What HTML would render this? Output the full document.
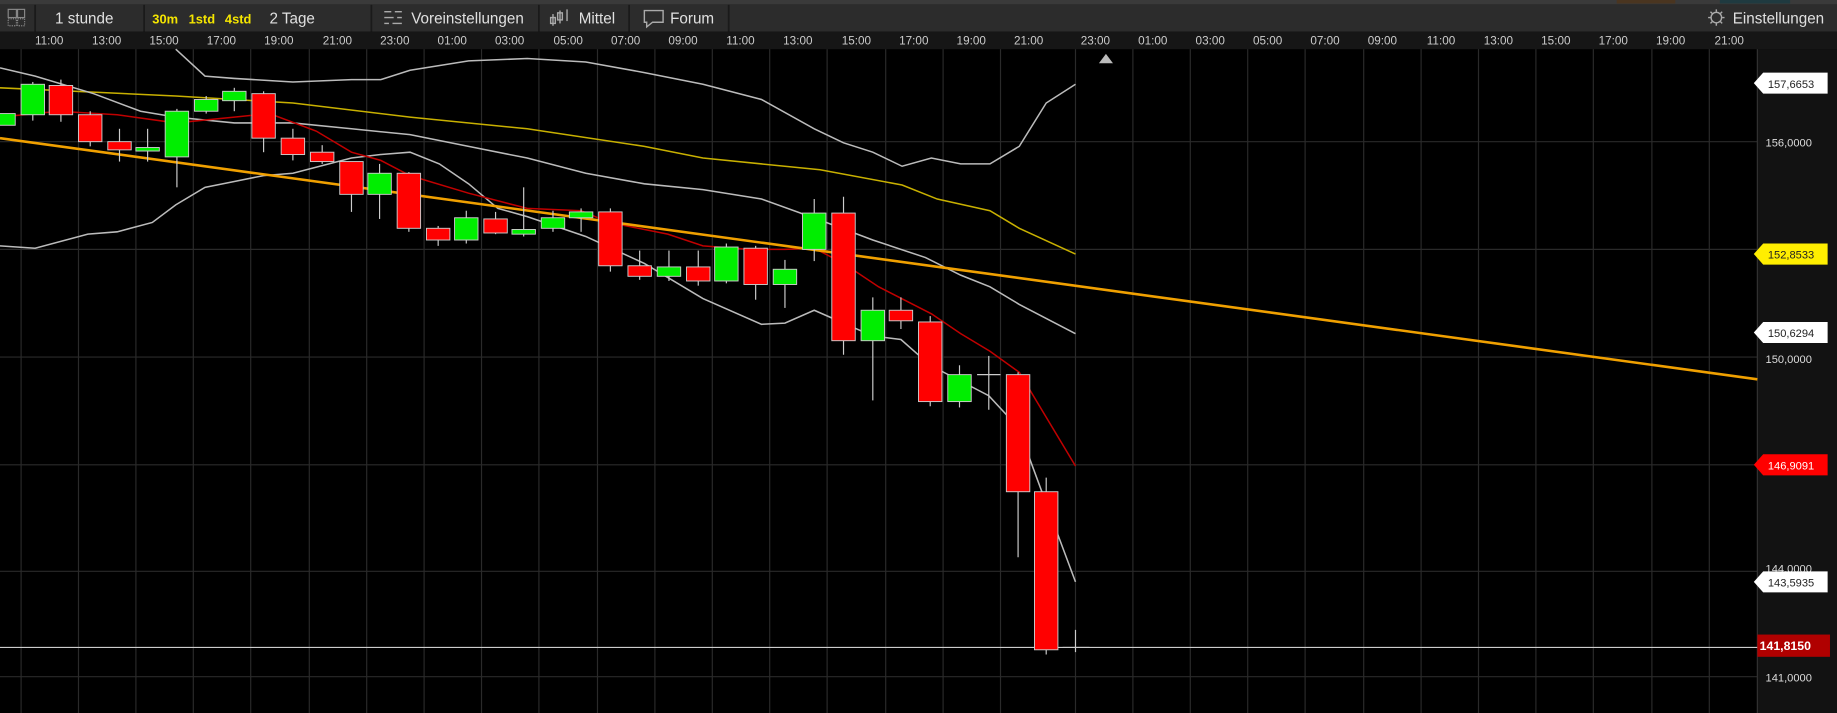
<!DOCTYPE html>
<html><head><meta charset="utf-8"><style>
html,body{margin:0;padding:0;background:#000;overflow:hidden}
svg{display:block}
text{font-family:"Liberation Sans",Arial,sans-serif}
</style></head><body>
<svg width="1837" height="713" viewBox="0 0 1568 609" preserveAspectRatio="none">
<rect width="1568" height="609" fill="#000"/>
<!-- top strip -->
<rect x="0" y="0" width="1568" height="4" fill="#3a3a3a"/>
<rect x="1380" y="0" width="50" height="3" fill="#4a3520"/>
<rect x="1468" y="0" width="60" height="3" fill="#1f3a40"/>
<!-- toolbar -->
<rect x="0" y="4" width="1568" height="23" fill="#2c2c2c"/>
<g stroke="#1a1a1a" stroke-width="1.5">
<line x1="30" y1="4" x2="30" y2="27"/><line x1="123" y1="4" x2="123" y2="27"/>
<line x1="317" y1="4" x2="317" y2="27"/><line x1="460" y1="4" x2="460" y2="27"/>
<line x1="537" y1="4" x2="537" y2="27"/><line x1="622" y1="4" x2="622" y2="27"/>
</g>
<g stroke="#888" fill="none" stroke-width="1"><rect x="7" y="8" width="7" height="7"/><rect x="15" y="8" width="6" height="7"/><rect x="7" y="16" width="7" height="6" stroke-dasharray="1,1"/><rect x="15" y="16" width="6" height="6" stroke-dasharray="1,1"/></g>
<g font-size="13" fill="#e0e0e0">
<text x="47" y="20">1 stunde</text>
<text x="130" y="20" fill="#f5e600" font-size="11" font-weight="bold">30m</text>
<text x="161" y="20" fill="#f5e600" font-size="11" font-weight="bold">1std</text>
<text x="192" y="20" fill="#f5e600" font-size="11" font-weight="bold">4std</text>
<text x="230" y="20">2 Tage</text>
<text x="351" y="20">Voreinstellungen</text>
<text x="494" y="20">Mittel</text>
<text x="572" y="20">Forum</text>
<text x="1479" y="20">Einstellungen</text>
</g>
<g stroke="#aaa" stroke-width="1.2" fill="none">
<line x1="328" y1="10" x2="334" y2="10"/><line x1="337" y1="10" x2="343" y2="10"/>
<line x1="328" y1="15" x2="336" y2="15"/><line x1="339" y1="15" x2="343" y2="15"/>
<line x1="328" y1="20" x2="332" y2="20"/><line x1="335" y1="20" x2="343" y2="20"/>
<line x1="472" y1="12" x2="472" y2="22"/><rect x="470" y="15" width="4" height="5"/><line x1="478" y1="9" x2="478" y2="20"/><rect x="476" y="11" width="4" height="6"/><line x1="484" y1="8" x2="484" y2="18"/>
<path d="M550 9 h16 v10 h-9 l-5 4 v-4 h-2 z"/>
<circle cx="1465" cy="15" r="4.5"/>
<path d="M1465 8v2M1465 20v2M1458 15h2M1470 15h2M1460 10l1.5 1.5M1468.5 18.5l1.5 1.5M1460 20l1.5-1.5M1468.5 11.5l1.5-1.5"/>
</g>
<!-- time axis -->
<rect x="0" y="27" width="1568" height="15" fill="#161616"/>
<g font-size="10" fill="#ccc" text-anchor="middle">
<text x="42" y="38">11:00</text><text x="91" y="38">13:00</text><text x="140" y="38">15:00</text><text x="189" y="38">17:00</text><text x="238" y="38">19:00</text><text x="288" y="38">21:00</text><text x="337" y="38">23:00</text><text x="386" y="38">01:00</text><text x="435" y="38">03:00</text><text x="485" y="38">05:00</text><text x="534" y="38">07:00</text><text x="583" y="38">09:00</text><text x="632" y="38">11:00</text><text x="681" y="38">13:00</text><text x="731" y="38">15:00</text><text x="780" y="38">17:00</text><text x="829" y="38">19:00</text><text x="878" y="38">21:00</text><text x="935" y="38">23:00</text><text x="984" y="38">01:00</text><text x="1033" y="38">03:00</text><text x="1082" y="38">05:00</text><text x="1131" y="38">07:00</text><text x="1180" y="38">09:00</text><text x="1230" y="38">11:00</text><text x="1279" y="38">13:00</text><text x="1328" y="38">15:00</text><text x="1377" y="38">17:00</text><text x="1426" y="38">19:00</text><text x="1476" y="38">21:00</text>
</g>
<path d="M938 54 l6 -8 l6 8 z" fill="#bbb"/>
<!-- grid -->
<g stroke="#2a2a2a" stroke-width="1">
<line x1="18" y1="42" x2="18" y2="609"/><line x1="67" y1="42" x2="67" y2="609"/><line x1="116" y1="42" x2="116" y2="609"/><line x1="165" y1="42" x2="165" y2="609"/><line x1="214" y1="42" x2="214" y2="609"/><line x1="264" y1="42" x2="264" y2="609"/><line x1="313" y1="42" x2="313" y2="609"/><line x1="362" y1="42" x2="362" y2="609"/><line x1="411" y1="42" x2="411" y2="609"/><line x1="460" y1="42" x2="460" y2="609"/><line x1="510" y1="42" x2="510" y2="609"/><line x1="559" y1="42" x2="559" y2="609"/><line x1="608" y1="42" x2="608" y2="609"/><line x1="657" y1="42" x2="657" y2="609"/><line x1="706" y1="42" x2="706" y2="609"/><line x1="756" y1="42" x2="756" y2="609"/><line x1="805" y1="42" x2="805" y2="609"/><line x1="854" y1="42" x2="854" y2="609"/><line x1="918" y1="42" x2="918" y2="609"/><line x1="967" y1="42" x2="967" y2="609"/><line x1="1016" y1="42" x2="1016" y2="609"/><line x1="1065" y1="42" x2="1065" y2="609"/><line x1="1114" y1="42" x2="1114" y2="609"/><line x1="1164" y1="42" x2="1164" y2="609"/><line x1="1213" y1="42" x2="1213" y2="609"/><line x1="1262" y1="42" x2="1262" y2="609"/><line x1="1311" y1="42" x2="1311" y2="609"/><line x1="1360" y1="42" x2="1360" y2="609"/><line x1="1410" y1="42" x2="1410" y2="609"/><line x1="1459" y1="42" x2="1459" y2="609"/>
<line x1="0" y1="121" x2="1500" y2="121"/><line x1="0" y1="213" x2="1500" y2="213"/><line x1="0" y1="305" x2="1500" y2="305"/><line x1="0" y1="397" x2="1500" y2="397"/><line x1="0" y1="488" x2="1500" y2="488"/><line x1="0" y1="578" x2="1500" y2="578"/>
</g>
<!-- price axis -->
<rect x="1500" y="42" width="68" height="567" fill="#121212"/>
<line x1="1500" y1="42" x2="1500" y2="609" stroke="#333"/>
<g font-size="9.5" fill="#ddd"><text x="1507" y="125">156,0000</text><text x="1507" y="310">150,0000</text><text x="1507" y="489">144,0000</text><text x="1507" y="582">141,0000</text></g>
<!-- indicator lines -->
<g fill="none" stroke-width="1.3">
<polyline stroke="#c8b000" points="0,75 150,82 250,88 350,100 450,110 550,125 600,135 700,145 770,158 800,170 845,180 870,195 918,217"/>
<polyline stroke="#bbb" points="150,42 175,65 200,67 250,70 300,68 325,68 350,60 400,52 450,50 500,53 550,62 600,72 650,85 695,110 720,122 745,130 770,142 795,135 820,140 845,140 870,125 893,88 918,72"/>
<polyline stroke="#bbb" points="0,58 30,65 80,80 120,95 150,100 200,105 250,105 300,110 350,115 400,125 450,135 500,148 550,157 600,162 650,170 700,188 745,205 790,220 820,235 845,245 870,260 918,285"/>
<polyline stroke="#bbb" points="0,210 30,212 75,200 100,198 130,190 150,175 175,160 200,155 225,150 250,148 300,135 325,132 350,130 375,140 400,157 425,178 450,185 500,202 550,225 600,255 650,277 670,276 695,265 720,276 745,287 769,290 794,312 819,325 844,338 869,365 893,430 918,497"/>
<polyline stroke="#c00000" points="0,100 50,95 100,98 150,105 200,100 230,97 270,112 300,130 325,137 350,150 400,165 450,178 496,180 520,190 570,200 600,210 640,213 670,213 695,212 720,225 750,245 795,268 820,285 845,300 870,318 918,398"/>
</g>
<line x1="0" y1="118" x2="1500" y2="324" stroke="#f0a000" stroke-width="2.2"/>
<line x1="0" y1="553" x2="1500" y2="553" stroke="#ccc" stroke-width="1"/>
<!-- candles -->
<g stroke="#ccc" stroke-width="1">
<line x1="28" y1="70" x2="28" y2="103"/><line x1="52" y1="68" x2="52" y2="104"/><line x1="77" y1="95" x2="77" y2="125"/><line x1="102" y1="110" x2="102" y2="138"/><line x1="126" y1="110" x2="126" y2="138"/><line x1="151" y1="93" x2="151" y2="160"/><line x1="176" y1="82" x2="176" y2="97"/><line x1="200" y1="75" x2="200" y2="95"/><line x1="225" y1="78" x2="225" y2="130"/><line x1="250" y1="110" x2="250" y2="137"/><line x1="275" y1="124" x2="275" y2="140"/><line x1="300" y1="138" x2="300" y2="181"/><line x1="324" y1="140" x2="324" y2="187"/><line x1="349" y1="147" x2="349" y2="198"/><line x1="374" y1="193" x2="374" y2="210"/><line x1="398" y1="180" x2="398" y2="208"/><line x1="423" y1="181" x2="423" y2="200"/><line x1="447" y1="160" x2="447" y2="202"/><line x1="472" y1="180" x2="472" y2="198"/><line x1="496" y1="178" x2="496" y2="198"/><line x1="521" y1="178" x2="521" y2="232"/><line x1="546" y1="214" x2="546" y2="239"/><line x1="571" y1="214" x2="571" y2="240"/><line x1="596" y1="214" x2="596" y2="244"/><line x1="620" y1="208" x2="620" y2="242"/><line x1="645" y1="210" x2="645" y2="256"/><line x1="670" y1="222" x2="670" y2="263"/><line x1="695" y1="170" x2="695" y2="223"/><line x1="720" y1="168" x2="720" y2="303"/><line x1="745" y1="254" x2="745" y2="342"/><line x1="769" y1="254" x2="769" y2="281"/><line x1="794" y1="270" x2="794" y2="347"/><line x1="819" y1="312" x2="819" y2="348"/><line x1="844" y1="304" x2="844" y2="350"/><line x1="869" y1="318" x2="869" y2="476"/><line x1="893" y1="408" x2="893" y2="559"/><line x1="918" y1="538" x2="918" y2="557"/>
<line x1="834" y1="320" x2="854" y2="320"/><line x1="907" y1="553" x2="930" y2="553"/>
</g>
<g stroke="#ccc" stroke-width="0.8">
<rect x="-5" y="97" width="18" height="10" fill="#00ee00"/>
<rect x="18" y="72" width="20" height="26" fill="#00ee00"/>
<rect x="42" y="73" width="20" height="25" fill="#ff0000"/>
<rect x="67" y="98" width="20" height="23" fill="#ff0000"/>
<rect x="92" y="121" width="20" height="7" fill="#ff0000"/>
<rect x="116" y="126" width="20" height="3" fill="#00ee00"/>
<rect x="141" y="95" width="20" height="39" fill="#00ee00"/>
<rect x="166" y="85" width="20" height="10" fill="#00ee00"/>
<rect x="190" y="78" width="20" height="8" fill="#00ee00"/>
<rect x="215" y="80" width="20" height="38" fill="#ff0000"/>
<rect x="240" y="118" width="20" height="14" fill="#ff0000"/>
<rect x="265" y="130" width="20" height="8" fill="#ff0000"/>
<rect x="290" y="138" width="20" height="28" fill="#ff0000"/>
<rect x="314" y="148" width="20" height="18" fill="#00ee00"/>
<rect x="339" y="148" width="20" height="47" fill="#ff0000"/>
<rect x="364" y="195" width="20" height="10" fill="#ff0000"/>
<rect x="388" y="186" width="20" height="19" fill="#00ee00"/>
<rect x="413" y="187" width="20" height="12" fill="#ff0000"/>
<rect x="437" y="196" width="20" height="4" fill="#00ee00"/>
<rect x="462" y="186" width="20" height="9" fill="#00ee00"/>
<rect x="486" y="181" width="20" height="5" fill="#00ee00"/>
<rect x="511" y="181" width="20" height="46" fill="#ff0000"/>
<rect x="536" y="227" width="20" height="9" fill="#ff0000"/>
<rect x="561" y="228" width="20" height="8" fill="#00ee00"/>
<rect x="586" y="228" width="20" height="12" fill="#ff0000"/>
<rect x="610" y="211" width="20" height="29" fill="#00ee00"/>
<rect x="635" y="212" width="20" height="31" fill="#ff0000"/>
<rect x="660" y="230" width="20" height="13" fill="#00ee00"/>
<rect x="685" y="182" width="20" height="31" fill="#00ee00"/>
<rect x="710" y="182" width="20" height="109" fill="#ff0000"/>
<rect x="735" y="265" width="20" height="26" fill="#00ee00"/>
<rect x="759" y="265" width="20" height="9" fill="#ff0000"/>
<rect x="784" y="275" width="20" height="68" fill="#ff0000"/>
<rect x="809" y="320" width="20" height="23" fill="#00ee00"/>
<rect x="859" y="320" width="20" height="100" fill="#ff0000"/>
<rect x="883" y="420" width="20" height="135" fill="#ff0000"/>
</g>
<!-- price labels -->
<g font-size="9.5">
<path d="M1497 71 l8 -9 h55 v18 h-55 z" fill="#fff"/><text x="1509" y="75" fill="#222">157,6653</text>
<path d="M1497 217 l8 -9 h55 v18 h-55 z" fill="#ffee00"/><text x="1509" y="221" fill="#222">152,8533</text>
<path d="M1497 284 l8 -9 h55 v18 h-55 z" fill="#fff"/><text x="1509" y="288" fill="#222">150,6294</text>
<path d="M1497 397 l8 -9 h55 v18 h-55 z" fill="#ff0000"/><text x="1509" y="401" fill="#fff">146,9091</text>
<path d="M1497 497 l8 -9 h55 v18 h-55 z" fill="#fff"/><text x="1509" y="501" fill="#222">143,5935</text>
<rect x="1500" y="542" width="62" height="19" fill="#b00000"/><text x="1502" y="555" fill="#fff" font-weight="bold" font-size="10.5">141,8150</text>
</g>
</svg>
</body></html>
